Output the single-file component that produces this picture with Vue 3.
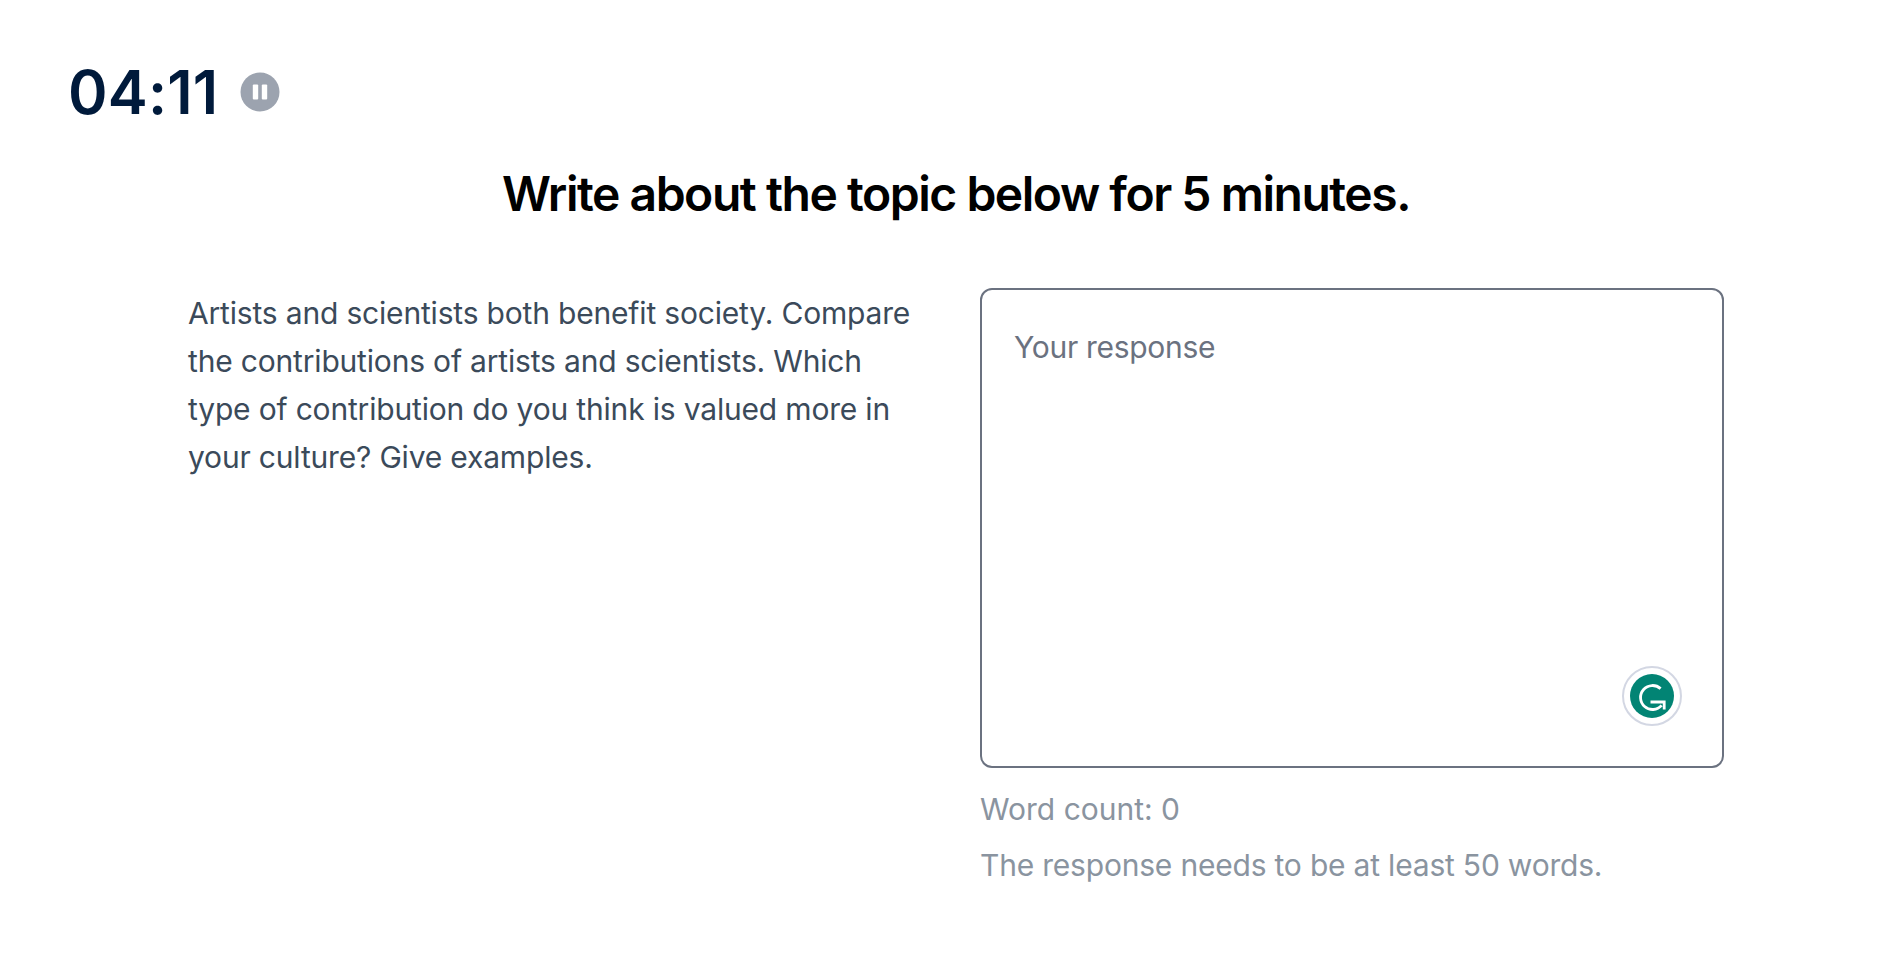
<script setup>
const prompt = 'Artists and scientists both benefit society. Compare the contributions of artists and scientists. Which type of contribution do you think is valued more in your culture? Give examples.'
</script>

<template>
  <div class="page">
    <header class="timer">
      <span class="time">04:11</span>
      <button class="pause" type="button" aria-label="Pause">
        <svg width="40" height="40" viewBox="0 0 40 40">
          <circle cx="20" cy="20" r="19.5" fill="#9ca3af" />
          <rect x="12.8" y="12.5" width="5.4" height="15" rx="1" fill="#fff" />
          <rect x="21.8" y="12.5" width="5.4" height="15" rx="1" fill="#fff" />
        </svg>
      </button>
    </header>
    <h1 class="title">Write about the topic below for 5 minutes.</h1>
    <main class="columns">
      <p class="prompt">{{ prompt }}</p>
      <section class="answer">
        <div class="box">
          <span class="placeholder">Your response</span>
          <span class="grammarly">
            <svg width="60" height="60" viewBox="0 0 60 60">
              <circle cx="30" cy="30" r="29" fill="#fff" stroke="#d3d7e3" stroke-width="2" />
              <circle cx="30" cy="30" r="22" fill="#028474" />
              <path d="M38.6 22.6 A12 12 0 1 0 39.6 39.4 M28.5 36 H42.2 V43.5" fill="none" stroke="#fff" stroke-width="2.8" />
            </svg>
          </span>
        </div>
        <p class="count">Word count: 0</p>
        <p class="hint">The response needs to be at least 50 words.</p>
      </section>
    </main>
  </div>
</template>

<style>
html, body { margin: 0; background: #fff; }
</style>

<style scoped>
.page {
  height: 960px;
  box-sizing: border-box;
  overflow: hidden;
  padding: 58px 0 0 68px;
  font-family: Inter, "Liberation Sans", sans-serif;
}
.timer {
  display: flex;
  align-items: center;
  gap: 22px;
  height: 68px;
}
.time {
  font-size: 60px;
  line-height: 68px;
  font-weight: 600;
  letter-spacing: 0.2px;
  color: #001a3b;
}
.pause {
  display: flex;
  width: 40px;
  height: 40px;
  padding: 0;
  border: 0;
  background: none;
}
.title {
  width: 1776px;
  margin: 38px 0 0;
  font-size: 48px;
  line-height: 60px;
  font-weight: 600;
  letter-spacing: -1.47px;
  color: #000;
  text-align: center;
}
.columns {
  display: grid;
  grid-template-columns: 736px 744px;
  column-gap: 56px;
  margin: 64px 0 0 120px;
}
.prompt {
  margin: 1px 0 0;
  font-size: 30px;
  line-height: 48px;
  letter-spacing: -0.18px;
  color: #3b4a5a;
}
.box {
  position: relative;
  box-sizing: border-box;
  height: 480px;
  padding: 33px 32px;
  border: 2px solid #6b7280;
  border-radius: 12px;
}
.placeholder {
  font-size: 30px;
  line-height: 48px;
  letter-spacing: -0.3px;
  color: #6b7280;
}
.grammarly {
  position: absolute;
  right: 40px;
  bottom: 40px;
  display: flex;
}
.count, .hint {
  margin: 0;
  font-size: 30px;
  line-height: 48px;
  letter-spacing: -0.2px;
  color: #8a94a0;
}
.count { margin-top: 17px; letter-spacing: 0; }
.hint { margin-top: 8px; }
</style>
